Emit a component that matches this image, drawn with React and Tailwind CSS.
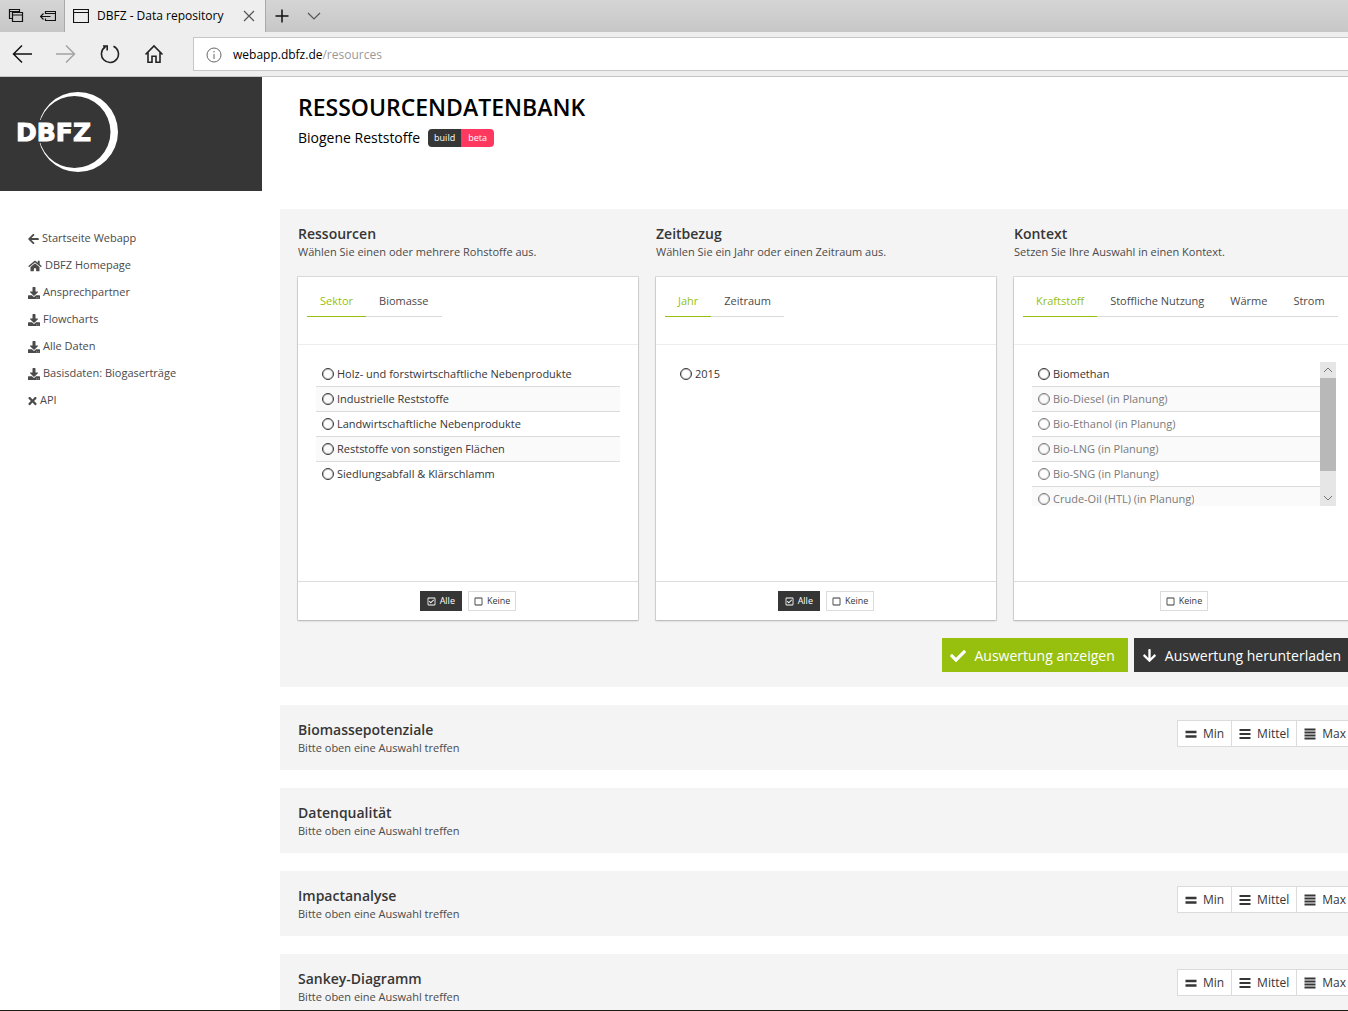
import { useState } from "react";
import {
  FaArrowDown,
  FaArrowLeft,
  FaCheck,
  FaDownload,
  FaHome,
  FaRegCheckSquare,
  FaRegSquare,
  FaTimes,
} from "react-icons/fa";

const NAV_ITEMS = [
  { label: "Startseite Webapp", icon: FaArrowLeft, iconWidth: "w-[11px]" },
  { label: "DBFZ Homepage", icon: FaHome, iconWidth: "w-[14px]" },
  { label: "Ansprechpartner", icon: FaDownload, iconWidth: "w-3" },
  { label: "Flowcharts", icon: FaDownload, iconWidth: "w-3" },
  { label: "Alle Daten", icon: FaDownload, iconWidth: "w-3" },
  { label: "Basisdaten: Biogaserträge", icon: FaDownload, iconWidth: "w-3" },
  { label: "API", icon: FaTimes, iconWidth: "w-[9px]" },
];

const FILTERS = [
  {
    id: "ressourcen",
    title: "Ressourcen",
    hint: "Wählen Sie einen oder mehrere Rohstoffe aus.",
    tabs: ["Sektor", "Biomasse"],
    selectAll: true,
    options: [
      { label: "Holz- und forstwirtschaftliche Nebenprodukte" },
      { label: "Industrielle Reststoffe" },
      { label: "Landwirtschaftliche Nebenprodukte" },
      { label: "Reststoffe von sonstigen Flächen" },
      { label: "Siedlungsabfall & Klärschlamm" },
    ],
  },
  {
    id: "zeitbezug",
    title: "Zeitbezug",
    hint: "Wählen Sie ein Jahr oder einen Zeitraum aus.",
    tabs: ["Jahr", "Zeitraum"],
    selectAll: true,
    options: [{ label: "2015" }],
  },
  {
    id: "kontext",
    title: "Kontext",
    hint: "Setzen Sie Ihre Auswahl in einen Kontext.",
    tabs: ["Kraftstoff", "Stoffliche Nutzung", "Wärme", "Strom"],
    scroll: true,
    options: [
      { label: "Biomethan" },
      { label: "Bio-Diesel (in Planung)", disabled: true },
      { label: "Bio-Ethanol (in Planung)", disabled: true },
      { label: "Bio-LNG (in Planung)", disabled: true },
      { label: "Bio-SNG (in Planung)", disabled: true },
      { label: "Crude-Oil (HTL) (in Planung)", disabled: true },
    ],
  },
];

const RESULTS = [
  { title: "Biomassepotenziale", levels: true },
  { title: "Datenqualität", levels: false },
  { title: "Impactanalyse", levels: true },
  { title: "Sankey-Diagramm", levels: true },
];

function Line({ d, size = 20, color = "#111", width = 1.2 }) {
  return (
    <svg width={size} height={size} viewBox={`0 0 ${size} ${size}`} fill="none" stroke={color} strokeWidth={width}>
      <path d={d} />
    </svg>
  );
}

function BrowserChrome() {
  return (
    <header className="shrink-0 border-b border-[#c4c6c6] bg-[#eeeeee] text-black">
      <div className="flex h-8 items-stretch bg-linear-to-b from-[#d6d5d6] to-[#c8c7c8]">
        <div className="flex w-16 items-center justify-between px-2">
          <button type="button" aria-label="Tabs" className="flex">
            <Line size={16} d="M4.5 10.5h-3v-9h10v3M1.5 3.5h10M4.5 4.5h10v9h-10zM4.5 7h10" />
          </button>
          <button type="button" aria-label="Set tabs aside" className="flex">
            <Line size={16} d="M5.5 6v-2.500h10v9h-10v-2M5.500 5.500h10M.5 8.500h10M3.500 5.500l-3 3 3 3" />
          </button>
        </div>
        <div className="flex w-[202px] items-center border-x border-[#a9a9a9] bg-[#eeeeee] pl-2">
          <Line size={16} d="M.5 1.5h15v13H.5zM.5 4.5h15" />
          <span className="ml-2 flex-1 text-xs whitespace-nowrap">DBFZ - Data repository</span>
          <button type="button" aria-label="Close tab" className="mr-2 flex">
            <Line size={16} color="#555" d="M3 3l10 10M13 3L3 13" />
          </button>
        </div>
        <button type="button" aria-label="New tab" className="flex items-center pl-2">
          <Line size={16} width={1.5} d="M8 1.5v13M1.5 8h13" />
        </button>
        <button type="button" aria-label="More tabs" className="flex items-center pl-4">
          <Line size={16} color="#555" d="M2 5l6 6 6-6" />
        </button>
      </div>
      <div className="flex h-11 items-center">
        <div className="flex w-[193px] shrink-0 items-center gap-6 pl-3">
          <button type="button" aria-label="Back" className="flex">
            <Line width={1.5} d="M20 10H1.5M10 1.5L1.5 10l8.500 8.500" />
          </button>
          <button type="button" aria-label="Forward" className="flex">
            <Line color="#a3a3a3" width={1.5} d="M0 10h18.500M10 1.500l8.500 8.500-8.500 8.500" />
          </button>
          <button type="button" aria-label="Reload" className="flex">
            <Line width={1.6} color="#222" d="M13.500 2.300a8.500 8.500 0 1 1-8 .5M3 2h4.200v4.500" />
          </button>
          <button type="button" aria-label="Home" className="flex">
            <Line width={1.6} color="#222" d="M1.500 10.500L10 2l8.500 8.500M4 8.500v9.700h4v-6h4v6h4V8.500" />
          </button>
        </div>
        <div className="flex h-[34px] min-w-0 flex-1 items-center border border-r-0 border-[#c6c6c6] bg-white pt-px pl-3 text-xs">
          <svg width="16" height="16" viewBox="0 0 16 16" fill="none" stroke="#666">
            <circle cx="8" cy="8" r="7" />
            <path d="M8 7v5M8 4v1.500" />
          </svg>
          <label htmlFor="address" className="ml-[11px]">webapp.dbfz.de</label>
          <input
            id="address"
            type="text"
            defaultValue="/resources"
            className="min-w-0 flex-1 bg-transparent text-[#999] outline-none"
          />
        </div>
      </div>
    </header>
  );
}

function Logo() {
  return (
    <svg width="104" height="84" viewBox="0 0 104 84" role="img" aria-label="DBFZ">
      <path
        fill="#fff"
        fillRule="evenodd"
        d="M22 42a40 40 0 1 1 80 0a40 40 0 1 1-80 0zM22.500 42a36 36 0 1 0 72 0a36 36 0 1 0-72 0z"
      />
      <path fill="#363636" d="M0 30h40v23H0z" />
      <text
        x="0"
        y="51"
        fill="#fff"
        stroke="#fff"
        strokeWidth="1"
        fontFamily="DejaVu Sans, sans-serif"
        fontWeight="700"
        fontSize="25"
      >
        DBFZ
      </text>
    </svg>
  );
}

function Sidebar() {
  return (
    <aside className="w-[262px] shrink-0">
      <div className="h-[114px] bg-[#363636] pt-[13px] pl-4">
        <Logo />
      </div>
      <nav className="pt-[34px] pl-7">
        {NAV_ITEMS.map(({ label, icon: Icon, iconWidth }) => (
          <a key={label} href="#" className="flex h-[27px] items-center gap-[3px] text-[11px] text-[#4a4a4a]">
            <Icon className={`h-3 ${iconWidth}`} />
            {label}
          </a>
        ))}
      </nav>
    </aside>
  );
}

function ScrollBar() {
  return (
    <div aria-hidden="true" className="flex w-4 shrink-0 flex-col bg-[#e6e6e6]">
      <div className="flex h-4 items-center justify-center">
        <Line size={10} color="#777" width={1} d="M1 7l4-4 4 4" />
      </div>
      <div className="h-[93px] bg-[#b8b8b8]" />
      <div className="mt-auto flex h-4 items-center justify-center">
        <Line size={10} color="#777" width={1} d="M1 3l4 4 4-4" />
      </div>
    </div>
  );
}

function FilterCard({ filter }) {
  const [tab, setTab] = useState(filter.tabs[0]);
  const [selected, setSelected] = useState(null);

  return (
    <div className="min-w-0">
      <h2 className="text-sm leading-[18px] font-semibold text-[#363636]">{filter.title}</h2>
      <p className="text-[11px] leading-[18px] text-[#4a4a4a]">{filter.hint}</p>

      <div className="mt-4 flex flex-col bg-white shadow-[0_1px_2px_rgba(10,10,10,0.2),0_0_0_1px_rgba(10,10,10,0.1)]">
        <div className="h-[68px] border-b border-[#ededed] pl-[9px]">
          <div role="tablist" className="flex h-10">
            {filter.tabs.map((name) => (
              <button
                key={name}
                type="button"
                role="tab"
                aria-selected={tab === name}
                onClick={() => setTab(name)}
                className={
                  tab === name
                    ? "border-b border-[#97bf0d] px-[13px] pt-[10px] text-[11px] whitespace-nowrap text-[#97bf0d]"
                    : "border-b border-[#dbdbdb] px-[13px] pt-[10px] text-[11px] whitespace-nowrap text-[#4a4a4a]"
                }
              >
                {name}
              </button>
            ))}
          </div>
        </div>

        <div className="h-[236px] px-[18px] pt-[17px]">
          <div className="flex h-36 overflow-hidden">
            <ul className="min-w-0 flex-1">
              {filter.options.map((option) => (
                <li
                  key={option.label}
                  className="h-[25px] border-b border-[#dbdbdb] last:border-transparent even:bg-[#fafafa]"
                >
                  <label
                    className={
                      option.disabled
                        ? "flex h-full items-center gap-[3px] pl-[6px] text-[11px] text-[#7a7a7a]"
                        : "flex h-full items-center gap-[3px] pl-[6px] text-[11px] text-[#363636]"
                    }
                  >
                    <input
                      type="radio"
                      name={filter.id}
                      disabled={option.disabled}
                      checked={selected === option.label}
                      onChange={() => setSelected(option.label)}
                      className="size-3 shrink-0 appearance-none rounded-full border border-current ring-1 ring-current/30 ring-inset checked:bg-current"
                    />
                    <span className="truncate">{option.label}</span>
                  </label>
                </li>
              ))}
            </ul>
            {filter.scroll && <ScrollBar />}
          </div>
        </div>

        <div className="flex h-[39px] items-center justify-center gap-[6px] border-t border-[#dbdbdb]">
          {filter.selectAll && (
            <button type="button" className="flex h-5 items-center gap-1 bg-[#363636] px-[7px] text-[9px] text-white">
              <FaRegCheckSquare size={9} />
              Alle
            </button>
          )}
          <button
            type="button"
            onClick={() => setSelected(null)}
            className="flex h-5 items-center gap-1 border border-[#dbdbdb] bg-white px-[5px] text-[9px] text-[#363636]"
          >
            <FaRegSquare size={9} />
            Keine
          </button>
        </div>
      </div>
    </div>
  );
}

function LevelIcon({ d, width }) {
  return <Line size={12} color="#363636" width={width} d={d} />;
}

function LevelButtons() {
  const button = "flex h-[27px] items-center gap-[6px] border border-[#dbdbdb] bg-white px-[7px] text-xs text-[#363636]";
  return (
    <div className="-mt-px flex">
      <button type="button" className={button}>
        <LevelIcon width={2.4} d="M.500 4h11M.500 8.500h11" />
        Min
      </button>
      <button type="button" className={`${button} -ml-px`}>
        <LevelIcon width={1.8} d="M.500 2h11M.500 6h11M.500 10h11" />
        Mittel
      </button>
      <button type="button" className={`${button} -ml-px`}>
        <LevelIcon width={2} d="M.500 1.500h11M.500 4.500h11M.500 7.500h11M.500 10.500h11" />
        Max
      </button>
    </div>
  );
}

export default function App() {
  return (
    <div className="flex h-screen flex-col overflow-hidden border-b border-[#1c1c10] bg-white font-['Open_Sans','Noto_Sans',sans-serif]">
      <BrowserChrome />
      <div className="flex min-h-0 flex-1 overflow-hidden">
        <Sidebar />
        {/* the page is a little wider than the window and runs out on the right */}
        <main className="-mr-6 ml-[18px] min-w-0 flex-1">
          <div className="h-[132px] pt-[14px] pl-[18px]">
            <h1 className="text-[23px] leading-8 font-semibold text-black">RESSOURCENDATENBANK</h1>
            <div className="flex items-center gap-2">
              <p className="pt-px text-sm leading-7 text-black">Biogene Reststoffe</p>
              <span className="flex h-[18px] overflow-hidden rounded text-[9px] leading-[18px] text-white">
                <span className="bg-[#363636] px-[6px]">build</span>
                <span className="bg-[#ff3860] px-[7px]">beta</span>
              </span>
            </div>
          </div>

          <section className="bg-[#f4f4f4] px-[18px] pt-4 pb-[15px]">
            <div className="grid grid-cols-3 gap-[18px]">
              {FILTERS.map((filter) => (
                <FilterCard key={filter.id} filter={filter} />
              ))}
            </div>
            <div className="mt-[18px] flex justify-end gap-[6px]">
              <button type="button" className="flex h-[34px] items-center gap-2 bg-[#97bf0d] pt-px pr-[13px] pl-2 text-sm text-white">
                <FaCheck size={16} />
                Auswertung anzeigen
              </button>
              <button type="button" className="flex h-[34px] items-center gap-2 bg-[#363636] pt-px pr-[13px] pl-2 text-sm text-white">
                <FaArrowDown size={15} />
                Auswertung herunterladen
              </button>
            </div>
          </section>

          {RESULTS.map((result) => (
            <section key={result.title} className="mt-[18px] flex h-[65px] items-start justify-between bg-[#f4f4f4] px-[18px] pt-4">
              <div>
                <h2 className="text-sm leading-[18px] font-semibold text-[#363636]">{result.title}</h2>
                <p className="text-[11px] leading-[18px] text-[#4a4a4a]">Bitte oben eine Auswahl treffen</p>
              </div>
              {result.levels && <LevelButtons />}
            </section>
          ))}
        </main>
      </div>
    </div>
  );
}
